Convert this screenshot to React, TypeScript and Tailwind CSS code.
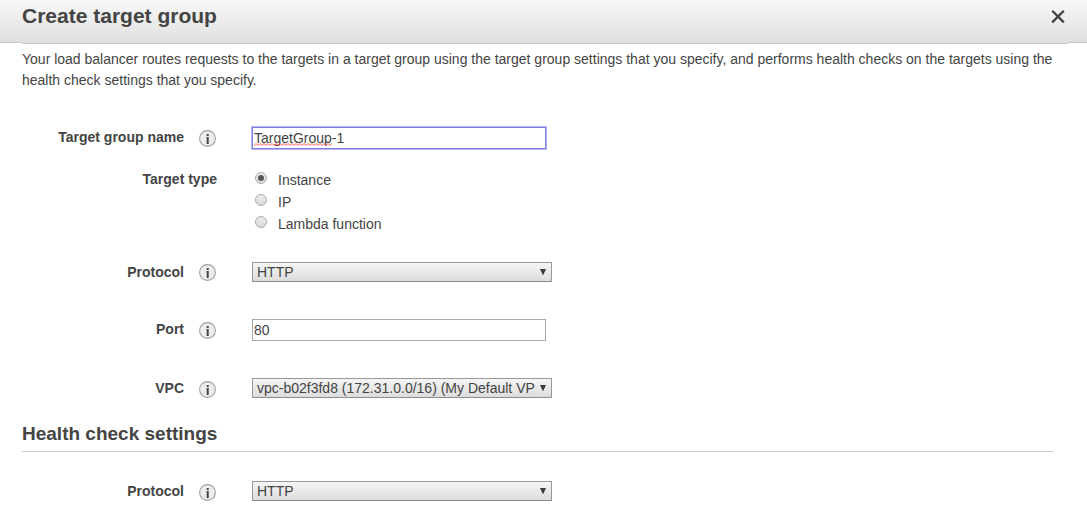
import React, { useState } from "react";

function InfoIcon({ className = "" }: { className?: string }) {
  return (
    <svg width="17" height="17" viewBox="0 0 17 17" className={`block shrink-0 ${className}`} aria-hidden="true">
      <circle cx="8.5" cy="8.5" r="7.9" fill="#ededed" stroke="#a0a0a0" strokeWidth="1.1" />
      <path d="M7.7 4h2v2h-2zM7.7 7h2v7h-2z" fill="#444" />
      <path d="M7 7h1v1h-1z" fill="#999" />
    </svg>
  );
}

type RowProps = {
  label: string;
  className?: string;
  info?: boolean;
  labelClass?: string;
  iconClass?: string;
  children: React.ReactNode;
};

function Row({ label, className = "", info = true, labelClass = "", iconClass = "mt-[3px]", children }: RowProps) {
  return (
    <div className={`flex items-start ${className}`}>
      <div className="flex w-[195px] shrink-0 items-start justify-end">
        <span className={`font-bold leading-[20px] whitespace-nowrap ${labelClass}`}>{label}</span>
        {info && <InfoIcon className={`ml-[15px] mr-px ${iconClass}`} />}
      </div>
      <div className="ml-[35px]">{children}</div>
    </div>
  );
}

function Select({ value }: { value: string }) {
  return (
    <button
      type="button"
      className="mt-px flex h-[20px] w-[300px] items-center justify-between rounded-[1px] border border-[#999] border-b-[#8c8c8c] bg-linear-to-b from-[#f5f5f5] to-[#dddddd] pl-1 pr-[5px] text-left leading-[18px]"
    >
      <span className="whitespace-nowrap">{value}</span>
      <svg width="6" height="6" viewBox="0 0 6 6" aria-hidden="true" className="-mt-px">
        <path d="M0 0h6L3.2 6h-.4z" fill="#3c3c3c" />
      </svg>
    </button>
  );
}

function Radio({ label, checked, onSelect }: { label: string; checked: boolean; onSelect: () => void }) {
  return (
    <label className="flex h-[22px] items-start pl-[3px]">
      <input type="radio" className="sr-only" checked={checked} onChange={onSelect} />
      <span className="mt-[3px] flex size-[12px] items-center justify-center rounded-full border border-[#aaa] bg-linear-to-b from-[#ececec] to-[#dadada]">
        {checked && <span className="size-[6px] rounded-full bg-[#555]" />}
      </span>
      <span className="ml-[11px] leading-[22px]">{label}</span>
    </label>
  );
}

export default function App() {
  const [target, setTarget] = useState("Instance");
  const [name, setName] = useState("TargetGroup-1");
  const [port, setPort] = useState("80");

  return (
    <div className="h-[510px] w-full overflow-hidden bg-white font-['Liberation_Sans',Arial,sans-serif] text-[14px] text-[#444]">
      <header className="flex h-[44px]">
        <div className="h-[43px] w-[22px] border-b border-[#c5c5c5] bg-linear-to-b from-[#f8f8f8] to-[#e0e0e0]" />
        <div className="flex h-[44px] flex-1 justify-between border-b border-[#c5c5c5] bg-linear-to-b from-[#f8f8f8] to-[#e0e0e0]">
          <h1 className="text-[21px] font-bold leading-[32px]">Create target group</h1>
          <button type="button" aria-label="Close" className="mt-[10px] mr-[3px] size-[14px]">
            <svg width="14" height="14" viewBox="0 0 14 14">
              <path d="M1.2 0.8L12.8 12.4M12.8 0.8L1.2 12.4" stroke="#444" strokeWidth="2.3" />
            </svg>
          </button>
        </div>
        <div className="h-[43px] w-[19px] border-b border-[#c5c5c5] bg-linear-to-b from-[#f8f8f8] to-[#e0e0e0]" />
      </header>

      <main className="pl-[22px] pr-[34px] pt-[5px]">
        <p className="h-[78px] leading-[21px]">
          Your load balancer routes requests to the targets in a target group using the target group settings that you
          specify, and performs health checks on the targets using the health check settings that you specify.
        </p>

        <Row label="Target group name" className="h-[42px]">
          <div className="relative">
            <input
              value={name}
              spellCheck={false}
              onChange={(e) => setName(e.target.value)}
              className="block h-[22px] w-[294px] border border-[#8080d4] px-px shadow-[0_0_0_1px_#b4b4fa] outline-none"
            />
            <svg className="absolute left-[2px] top-[16px]" width="78" height="3" aria-hidden="true">
              <defs>
                <pattern id="squiggle" width="4" height="3" patternUnits="userSpaceOnUse">
                  <path d="M-1 1.5L0 2.5L2 0.5L4 2.5L5 1.5" fill="none" stroke="#f33" strokeWidth="0.85" />
                </pattern>
              </defs>
              <rect width="78" height="3" fill="url(#squiggle)" />
            </svg>
          </div>
        </Row>

        <Row label="Target type" info={false} className="h-[92px]">
          {["Instance", "IP", "Lambda function"].map((t) => (
            <Radio key={t} label={t} checked={target === t} onSelect={() => setTarget(t)} />
          ))}
        </Row>

        <Row label="Protocol" className="h-[58px]" labelClass="mt-px">
          <Select value="HTTP" />
        </Row>

        <Row label="Port" className="h-[58px]">
          <input
            value={port}
            onChange={(e) => setPort(e.target.value)}
            className="block h-[22px] w-[294px] border border-[#a9a9a9] px-px outline-none"
          />
        </Row>

        <Row label="VPC" className="h-[45px]" labelClass="mt-px" iconClass="mt-[4px]">
          <Select value="vpc-b02f3fd8 (172.31.0.0/16) (My Default VP" />
        </Row>

        <h2 className="mb-[28px] h-[30px] border-b border-[#ccc] text-[19px] font-bold leading-[24px]">
          Health check settings
        </h2>

        <Row label="Protocol" labelClass="mt-px" iconClass="mt-[4px]">
          <Select value="HTTP" />
        </Row>
      </main>
    </div>
  );
}
